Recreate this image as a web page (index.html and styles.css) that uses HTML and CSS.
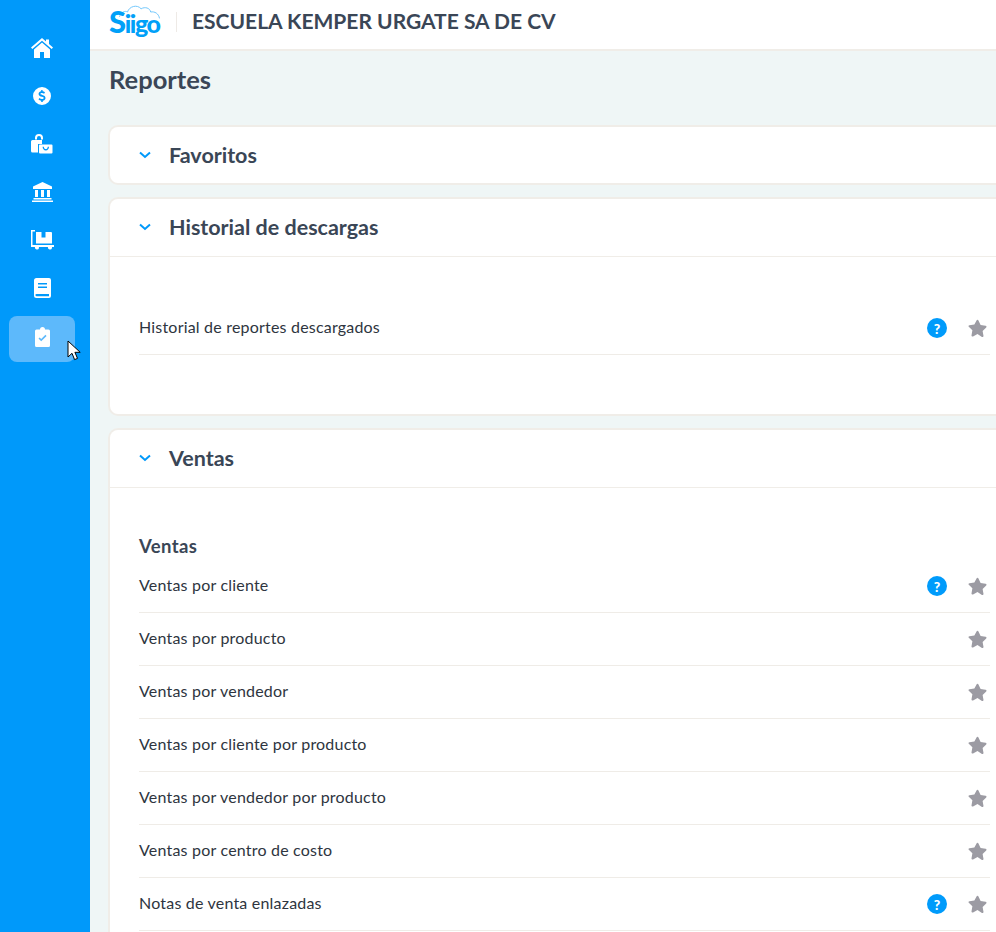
FILE: index.html
```html
<!DOCTYPE html>
<html lang="es">
<head>
<meta charset="utf-8">
<title>Reportes</title>
<link rel="stylesheet" href="styles.css">
</head>
<body>
<div class="shell">
  <nav class="sidebar">
    <a class="nav-item"><svg class="nav-icon" viewBox="0 0 22 20"><path d="M11 0 0 9.600l1.300 1.500L11 2.700l9.700 8.400 1.300-1.500-4-3.500V1.500h-3v2.100z"/><path d="M11 4.500 3 11.400V20h6v-6h4v6h6v-8.600z"/></svg></a>
    <a class="nav-item"><svg class="nav-icon" viewBox="0 0 20 20"><path fill-rule="evenodd" d="M10 1a9 9 0 1 1 0 18 9 9 0 0 1 0-18zM9.200 4v1.300C7.600 5.600 6.600 6.600 6.600 8c0 1.700 1.300 2.300 3.300 2.800 1.400.4 1.800.7 1.800 1.200 0 .6-.7 1-1.700 1-1 0-1.900-.4-2.600-1l-.9 1.400c.7.700 1.700 1.100 2.700 1.300V16h1.600v-1.300c1.700-.3 2.700-1.300 2.700-2.800 0-1.700-1.200-2.400-3.300-3-1.400-.3-1.800-.6-1.800-1.100 0-.5.6-.9 1.500-.9.800 0 1.500.3 2.200.8l.9-1.400c-.7-.5-1.500-.9-2.400-1V4z"/></svg></a>
    <a class="nav-item"><svg class="nav-icon" viewBox="0 0 22 20"><path d="M4 5.500V4a4 4 0 0 1 8 0v1.500h-2V4a2 2 0 0 0-4 0v1.500zM1.500 6H11v4H7v8.500H1.500A1.500 1.500 0 0 1 0 17V7.500A1.500 1.500 0 0 1 1.500 6z"/><path fill-rule="evenodd" d="M9 10.500h11.500a1 1 0 0 1 1 1v7a1 1 0 0 1-1 1H9a1 1 0 0 1-1-1v-7a1 1 0 0 1 1-1zm2.600 2.200c0 2 1.300 3.700 3.200 3.700s3.200-1.700 3.200-3.700h-1.300c0 1.300-.8 2.400-1.900 2.400s-1.900-1.100-1.900-2.400z"/></svg></a>
    <a class="nav-item"><svg class="nav-icon" viewBox="0 0 21 20"><path d="M10.500 0 20 4.500V7H1V4.500zM3 8h3v7H3zM9 8h3v7H9zM15 8h3v7h-3zM1.500 16h18v1.500h-18zM0 18.500h21V20H0z"/></svg></a>
    <a class="nav-item"><svg class="nav-icon" viewBox="0 0 23 20"><path d="M0 0h4v1.500h-2.500V15H23v2h-2.100a2 2 0 0 1 .1 1 2 2 0 1 1-4-1h-9.200a2 2 0 0 1 .2 1 2 2 0 1 1-4-1H0v-2h0z"/><path fill-rule="evenodd" d="M5 2h5.500v5.500h4V2H20a1 1 0 0 1 1 1v10.500H5z"/></svg></a>
    <a class="nav-item"><svg class="nav-icon" viewBox="0 0 17 20"><path fill-rule="evenodd" d="M2.500 0H15a2 2 0 0 1 2 2v16a2 2 0 0 1-2 2H2.500A2.500 2.500 0 0 1 0 17.500v-15A2.500 2.500 0 0 1 2.500 0zM4 5v1.500h9V5zm0 3.500V10h9V8.500zM2.500 16a1 1 0 0 0 0 2.200H15V16z"/></svg></a>
    <a class="nav-item nav-item-active"><svg class="nav-icon" viewBox="0 0 15 20"><path fill-rule="evenodd" d="M5 2.500a2.500 2.500 0 0 1 5 0h3.500A1.500 1.500 0 0 1 15 4v14.500a1.500 1.500 0 0 1-1.500 1.500h-12A1.500 1.500 0 0 1 0 18.500V4a1.500 1.500 0 0 1 1.500-1.500zM3.500 11.500 6.200 14.300l5.400-5.400-1.200-1.200-4.200 4.200-1.500-1.500z"/></svg></a>
    <svg class="cursor" viewBox="0 0 14 22"><path d="M1 1v16l4-3.700 2.600 6.300 2.900-1.200-2.600-6.100h5.300z"/></svg>
  </nav>
  <div class="content">
    <header class="topbar">
      <div class="logo">
        <svg class="logo-cloud" viewBox="0 0 52 20"><path d="M1 16C3 10 8 8 11 10 13 3 23 0 28 6 33 3 39 5 40 10 45 9 50 12 51 18"/></svg>
        <span class="logo-text"><span class="logo-s">S</span>iigo</span>
      </div>
      <span class="company">ESCUELA KEMPER URGATE SA DE CV</span>
    </header>
    <main class="main">
      <h1 class="page-title">Reportes</h1>

      <section class="card">
        <div class="card-head card-head-closed">
          <svg class="chevron" viewBox="0 0 12 8"><path d="M1 1.500 6 6l5-4.500"/></svg>
          <h2 class="card-title">Favoritos</h2>
        </div>
      </section>

      <section class="card">
        <div class="card-head">
          <svg class="chevron" viewBox="0 0 12 8"><path d="M1 1.500 6 6l5-4.500"/></svg>
          <h2 class="card-title">Historial de descargas</h2>
        </div>
        <div class="card-body card-body-history">
          <div class="row"><span class="row-label">Historial de reportes descargados</span><span class="help">?</span><svg class="star" viewBox="0 0 20 19"><path d="M10 .8c.5 0 .8.3 1 .7l2.300 4.800 5.200.8c1 .1 1.300 1.200.7 1.800l-3.800 3.700.9 5.200c.2 1-.8 1.600-1.600 1.200L10 15.900l-4.700 2.500c-.8.400-1.800-.2-1.600-1.200l.9-5.200L.8 8.300C.2 7.700.5 6.600 1.500 6.500l5.200-.8L9 1.500c.2-.4.500-.7 1-.7z"/></svg></div>
        </div>
      </section>

      <section class="card">
        <div class="card-head">
          <svg class="chevron" viewBox="0 0 12 8"><path d="M1 1.500 6 6l5-4.500"/></svg>
          <h2 class="card-title">Ventas</h2>
        </div>
        <div class="card-body card-body-sales">
          <h3 class="group-title">Ventas</h3>
          <div class="row"><span class="row-label">Ventas por cliente</span><span class="help">?</span><svg class="star" viewBox="0 0 20 19"><path d="M10 .8c.5 0 .8.3 1 .7l2.300 4.800 5.200.8c1 .1 1.300 1.200.7 1.800l-3.800 3.700.9 5.200c.2 1-.8 1.600-1.600 1.200L10 15.900l-4.700 2.500c-.8.400-1.800-.2-1.600-1.200l.9-5.200L.8 8.300C.2 7.700.5 6.600 1.500 6.500l5.200-.8L9 1.500c.2-.4.500-.7 1-.7z"/></svg></div>
          <div class="row"><span class="row-label">Ventas por producto</span><svg class="star" viewBox="0 0 20 19"><path d="M10 .8c.5 0 .8.3 1 .7l2.300 4.800 5.200.8c1 .1 1.300 1.200.7 1.800l-3.800 3.700.9 5.200c.2 1-.8 1.600-1.600 1.200L10 15.900l-4.700 2.500c-.8.400-1.800-.2-1.600-1.200l.9-5.200L.8 8.300C.2 7.700.5 6.600 1.500 6.500l5.200-.8L9 1.500c.2-.4.500-.7 1-.7z"/></svg></div>
          <div class="row"><span class="row-label">Ventas por vendedor</span><svg class="star" viewBox="0 0 20 19"><path d="M10 .8c.5 0 .8.3 1 .7l2.300 4.800 5.200.8c1 .1 1.300 1.200.7 1.800l-3.800 3.700.9 5.200c.2 1-.8 1.600-1.600 1.200L10 15.900l-4.700 2.500c-.8.400-1.800-.2-1.600-1.200l.9-5.200L.8 8.300C.2 7.700.5 6.600 1.500 6.500l5.200-.8L9 1.500c.2-.4.500-.7 1-.7z"/></svg></div>
          <div class="row"><span class="row-label">Ventas por cliente por producto</span><svg class="star" viewBox="0 0 20 19"><path d="M10 .8c.5 0 .8.3 1 .7l2.300 4.800 5.200.8c1 .1 1.300 1.200.7 1.800l-3.800 3.700.9 5.200c.2 1-.8 1.600-1.600 1.200L10 15.900l-4.700 2.500c-.8.400-1.800-.2-1.600-1.200l.9-5.200L.8 8.300C.2 7.700.5 6.600 1.500 6.500l5.200-.8L9 1.500c.2-.4.500-.7 1-.7z"/></svg></div>
          <div class="row"><span class="row-label">Ventas por vendedor por producto</span><svg class="star" viewBox="0 0 20 19"><path d="M10 .8c.5 0 .8.3 1 .7l2.300 4.800 5.200.8c1 .1 1.300 1.200.7 1.800l-3.800 3.700.9 5.200c.2 1-.8 1.600-1.600 1.200L10 15.900l-4.700 2.500c-.8.400-1.800-.2-1.600-1.200l.9-5.200L.8 8.300C.2 7.700.5 6.600 1.500 6.500l5.200-.8L9 1.500c.2-.4.500-.7 1-.7z"/></svg></div>
          <div class="row"><span class="row-label">Ventas por centro de costo</span><svg class="star" viewBox="0 0 20 19"><path d="M10 .8c.5 0 .8.3 1 .7l2.300 4.800 5.200.8c1 .1 1.300 1.200.7 1.800l-3.800 3.700.9 5.200c.2 1-.8 1.600-1.600 1.200L10 15.900l-4.700 2.500c-.8.400-1.800-.2-1.600-1.200l.9-5.200L.8 8.300C.2 7.700.5 6.600 1.500 6.500l5.200-.8L9 1.500c.2-.4.500-.7 1-.7z"/></svg></div>
          <div class="row"><span class="row-label">Notas de venta enlazadas</span><span class="help">?</span><svg class="star" viewBox="0 0 20 19"><path d="M10 .8c.5 0 .8.3 1 .7l2.300 4.800 5.200.8c1 .1 1.300 1.200.7 1.800l-3.800 3.700.9 5.200c.2 1-.8 1.600-1.600 1.200L10 15.900l-4.700 2.500c-.8.400-1.800-.2-1.600-1.200l.9-5.200L.8 8.300C.2 7.700.5 6.600 1.500 6.500l5.200-.8L9 1.500c.2-.4.500-.7 1-.7z"/></svg></div>
        </div>
      </section>
    </main>
  </div>
</div>
</body>
</html>
```
FILE: styles.css
```css
* { box-sizing: border-box; }
html, body { margin: 0; height: 100%; overflow: hidden; }
body { font-family: "Lato", "Open Sans", sans-serif; color: #3a4656; background: #eff6f6; }

.shell { display: flex; width: 996px; height: 932px; overflow: hidden; }

.sidebar {
  position: relative;
  flex: 0 0 90px;
  display: flex;
  flex-direction: column;
  align-items: center;
  padding: 25px 15px 0 9px;
  gap: 2px;
  background: #0099fa;
}
.nav-item {
  display: flex;
  align-items: center;
  justify-content: center;
  width: 66px;
  height: 46px;
  border-radius: 8px;
}
.nav-item-active { margin-top: 3px; padding-bottom: 4px; background: #5db9fb; }
.nav-icon { display: block; height: 20px; fill: #fff; }
.cursor {
  position: absolute;
  left: 67px;
  top: 340px;
  width: 14px;
  height: 22px;
  fill: #fff;
  stroke: #000;
  stroke-width: 1;
}

.content { flex: 0 0 930px; display: flex; flex-direction: column; }

.topbar {
  flex: 0 0 51px;
  display: flex;
  align-items: center;
  padding: 0 0 8px 19px;
  background: #fff;
  border-bottom: 2px solid #f0ede8;
}
.logo {
  position: relative;
  width: 68px;
  height: 41px;
  margin-right: 15px;
}
.logo::after {
  content: "";
  position: absolute;
  right: 0;
  top: 12px;
  width: 1px;
  height: 20px;
  background: #eeeae6;
}
.logo-cloud {
  position: absolute;
  left: 9px;
  top: 4px;
  width: 43px;
  height: 16px;
  fill: none;
  stroke: #6cc4fb;
  stroke-width: 1.200;
}
.logo-text {
  position: absolute;
  left: 0;
  top: 4px;
  font: 900 25px/34px "Lato", sans-serif;
  letter-spacing: -1.400px;
  color: #00a0f8;
}
.logo-s { font-size: 31px; }
.company { font-size: 21px; line-height: 26px; font-weight: 700; color: #3a4656; white-space: nowrap; }

.main { flex: 1; padding: 0 0 0 18px; min-height: 0; }
.page-title { margin: 0 0 0 1px; height: 74px; padding-top: 13px; font-size: 25.500px; line-height: 30px; font-weight: 700; color: #3a4656; }

.card {
  width: 912px;
  margin-bottom: 12px;
  background: #fff;
  border: 2px solid #f0ede8;
  border-right: 0;
  border-radius: 10px;
}
.card-head {
  display: flex;
  align-items: center;
  height: 58px;
  padding: 0 0 2px 29px;
  border-bottom: 1px solid #f0ede8;
}
.card-head-closed { height: 56px; padding-bottom: 0; border-bottom: 0; }
.chevron { width: 12px; height: 8px; margin-right: 18px; fill: none; stroke: #0099fa; stroke-width: 2; }
.card-title { margin: 0; font-size: 21.500px; line-height: 26px; font-weight: 700; color: #3a4656; }

.card-body { padding-left: 29px; padding-right: 30px; }
.card-body-history { padding-top: 45px; padding-bottom: 59px; }
.card-body-sales { padding-top: 45px; padding-bottom: 40px; }
.group-title { margin: 0; height: 27px; font-size: 18.500px; letter-spacing: .4px; line-height: 26px; font-weight: 700; color: #3a4656; }

.row {
  display: flex;
  align-items: center;
  height: 53px;
  border-bottom: 1px solid #efece7;
  padding-right: 3px;
}
.row-label { flex: 1; padding-bottom: 3px; font-size: 16px; letter-spacing: .2px; color: #2e3540; }
.help {
  display: flex;
  align-items: center;
  justify-content: center;
  width: 20px;
  height: 20px;
  margin-right: 21px;
  border-radius: 50%;
  background: #009bfb;
  color: #fff;
  font-size: 14px;
  font-weight: 900;
}
.star { display: block; width: 19px; height: 18px; fill: #9c9ba3; }
```
